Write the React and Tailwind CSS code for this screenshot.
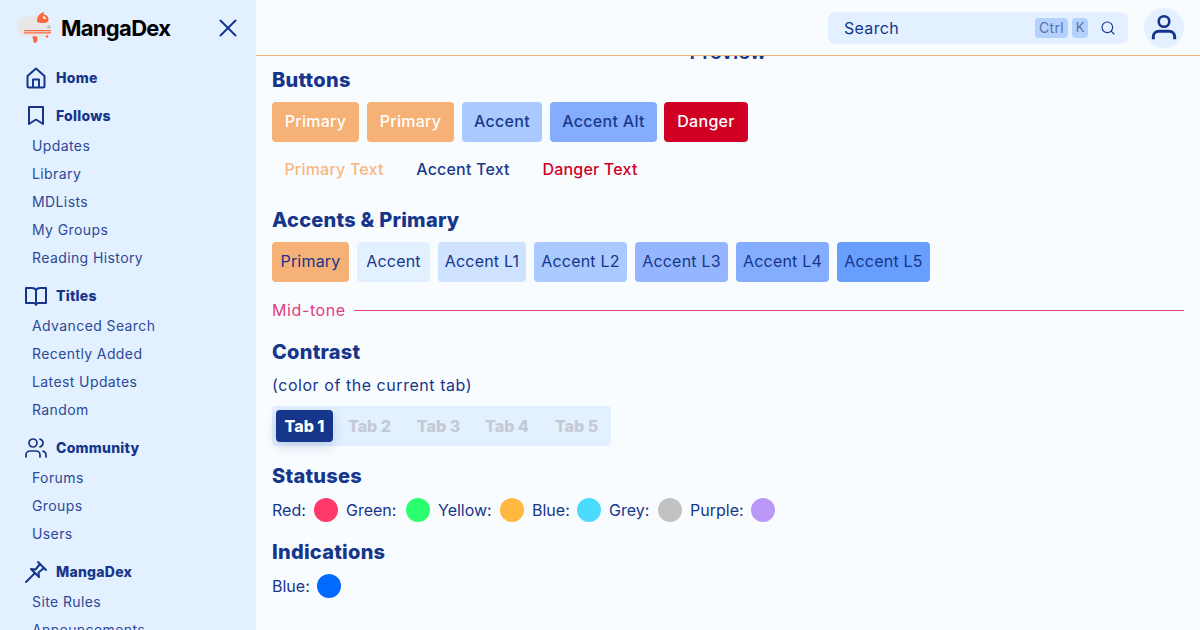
import { Search, Users, X } from "lucide-react";

function HomeIcon(props) {
  return (
    <svg viewBox="0 0 24 24" fill="none" stroke="currentColor" strokeWidth="2" strokeLinejoin="round" {...props}>
      <path d="M3.500 10L12 2.500 20.500 10V20a1.500 1.500 0 0 1-1.500 1.500H5A1.500 1.500 0 0 1 3.500 20z" />
      <path d="M9 21.500V13.500h6V21.500" />
    </svg>
  );
}

function BookmarkIcon(props) {
  return (
    <svg viewBox="0 0 24 24" fill="none" stroke="currentColor" strokeWidth="2" strokeLinejoin="round" {...props}>
      <path d="M5 3h14v17l-7-4.500-7 4.500z" />
    </svg>
  );
}

function BookIcon(props) {
  return (
    <svg viewBox="0 0 24 24" fill="none" stroke="currentColor" strokeWidth="2" strokeLinejoin="round" {...props}>
      <path d="M12 6C11 4.500 9.500 4 8 4H2v15h7c1.500 0 3 .5 3 2 0-1.500 1.500-2 3-2h7V4h-6c-1.500 0-3 .5-4 2z" />
      <path d="M12 6v15" />
    </svg>
  );
}

function PinIcon(props) {
  return (
    <svg viewBox="0 0 24 24" fill="none" stroke="currentColor" strokeWidth="2" strokeLinecap="round" strokeLinejoin="round" {...props}>
      <path d="M14 2l8 8" />
      <path d="M16 4l-4.500 5.500-4.500-.5 8 8-.5-4.500L20 8" />
      <path d="M11 13l-9 9" />
    </svg>
  );
}

const navGroups = [
  { title: "Home", icon: HomeIcon, items: [] },
  { title: "Follows", icon: BookmarkIcon, items: ["Updates", "Library", "MDLists", "My Groups", "Reading History"] },
  { title: "Titles", icon: BookIcon, items: ["Advanced Search", "Recently Added", "Latest Updates", "Random"] },
  { title: "Community", icon: Users, items: ["Forums", "Groups", "Users"] },
  { title: "MangaDex", icon: PinIcon, items: ["Site Rules", "Announcements"] },
];

const buttons = [
  { label: "Primary", className: "w-[87px] bg-[#f5b176] text-white" },
  { label: "Primary", className: "w-[87px] bg-[#f5b176] text-white" },
  { label: "Accent", className: "w-[80px] bg-[#a9c9ff] text-[#1b3a8a]" },
  { label: "Accent Alt", className: "w-[107px] mr-[-1px] bg-[#85adff] text-[#1b3a8a]" },
  { label: "Danger", className: "w-[84px] bg-[#d00025] text-white" },
];

const textButtons = [
  { label: "Primary Text", className: "w-[124px] text-[#f9b67f]" },
  { label: "Accent Text", className: "w-[118px] text-[#1b3a8a]" },
  { label: "Danger Text", className: "w-[120px] text-[#d00025]" },
];

const accents = [
  { label: "Primary", className: "w-[77px] bg-[#f5b176]" },
  { label: "Accent", className: "w-[73px] bg-[#e3f0ff]" },
  { label: "Accent L1", className: "w-[88px] bg-[#cfe2ff]" },
  { label: "Accent L2", className: "w-[93px] bg-[#a9c9ff]" },
  { label: "Accent L3", className: "w-[93px] bg-[#95b6ff]" },
  { label: "Accent L4", className: "w-[93px] bg-[#85adff]" },
  { label: "Accent L5", className: "w-[93px] bg-[#689fff]" },
];

const tabs = [
  { label: "Tab 2", className: "w-[47px] ml-[13px]" },
  { label: "Tab 3", className: "w-[45px] ml-[23px]" },
  { label: "Tab 4", className: "w-[46px] ml-[23px]" },
  { label: "Tab 5", className: "w-[45px] ml-[24px]" },
];

const statuses = [
  { label: "Red:", width: "w-[34px]", color: "bg-[#ff3a6b]" },
  { label: "Green:", width: "w-[52px]", color: "bg-[#2cff6e]" },
  { label: "Yellow:", width: "w-[54px]", color: "bg-[#ffb840]" },
  { label: "Blue:", width: "w-[37px]", color: "bg-[#4bdbff]" },
  { label: "Grey:", width: "w-[41px]", color: "bg-[#c2c2c2]" },
  { label: "Purple:", width: "w-[53px]", color: "bg-[#b998f8]" },
];

function Logo() {
  return (
    <svg viewBox="-1 0 37 33" className="w-[37px] h-[33px] shrink-0 ml-[-1px]">
      <path d="M-1 15c0-7 6-11 14-11 8 0 13 0 18 4 3 3 3 10 1 14-2 3-5 3-8 3H7c-5 0-8-4-8-10z" fill="#e8e8e8" />
      <path d="M19 9c0-5 3-8 7-9l-.5 2.500c2.500 0 5 2 5 4.500 0 3-2 4-5.500 4-3 0-6-.5-6-2z" fill="#ff6740" />
      <path d="M25 4c1.500 0 3 1.500 3 3l-3-.5z" fill="#ffffff" />
      <path d="M29 14l3-1 .5 3-3 1z" fill="#b8c2cc" />
      <path d="M6 18h27v1.200H6zM6 20.200h27v1.200H6z" fill="#ff6740" />
      <path d="M14.500 24.500c1-.5 3.500-.5 4.500 0l.5 2.500c0 2-1 3.500-2.500 4-1 0-1.500-1-1.500-2 0-1.500-1-2.500-1-4.500z" fill="#ff6740" />
      <circle cx="29" cy="24.500" r="1.200" fill="#ff6740" />
    </svg>
  );
}

function UserIcon() {
  return (
    <svg viewBox="0 0 28 30" fill="none" stroke="#15368a" className="w-[26px] h-[28px]">
      <circle cx="14" cy="8" r="5.700" strokeWidth="2.800" />
      <path d="M2.500 27v-2.500a6 6 0 0 1 6-6h11a6 6 0 0 1 6 6V27" strokeWidth="3.200" />
    </svg>
  );
}

function Sidebar() {
  return (
    <aside className="w-64 h-full shrink-0 overflow-hidden bg-[#e3f0ff] text-[#15368a]">
      <div className="h-14 pl-[18px] pr-[13px] flex items-center">
        <Logo />
        <span className="ml-[7px] text-[22px] font-bold tracking-[-0.7px] text-black">MangaDex</span>
        <X className="w-[30px] h-[30px] ml-auto text-[#15368a]" strokeWidth={1.6} />
      </div>
      <nav className="px-6 pt-[6px] flex flex-col">
        {navGroups.map(({ title, icon: Icon, items }, i) => (
          <div key={title} className={i === 0 ? "" : i === 1 ? "mt-[6px]" : "mt-2"}>
            <div className="h-8 flex items-center gap-2">
              <Icon className="w-6 h-6 shrink-0" strokeWidth={title === "Community" ? 1.7 : 2} />
              <span className="pb-0.5 text-[14px] font-extrabold tracking-[0.25px]">{title}</span>
            </div>
            {items.map((item) => (
              <div key={item} className="h-7 pb-0.5 pl-2 flex items-center text-[14px] text-[#2c4a98] tracking-[0.4px] whitespace-nowrap">
                {item}
              </div>
            ))}
          </div>
        ))}
      </nav>
    </aside>
  );
}

function Header() {
  return (
    <header className="h-14 shrink-0 pr-4 flex items-center justify-end border-b border-[#f5b176] text-[#15368a]">
      <div className="w-[300px] h-8 pl-4 pr-3 flex items-center rounded-lg bg-[#e3f0ff]">
        <span className="text-[16px] tracking-[0.3px]">Search</span>
        <span className="ml-auto h-5 w-[33px] flex items-center justify-center rounded bg-[#b5d2ff] text-[14px] tracking-[0.3px] text-[#5571ad]">
          Ctrl
        </span>
        <span className="ml-1 h-5 w-4 flex items-center justify-center rounded bg-[#b5d2ff] text-[13px] text-[#5571ad]">
          K
        </span>
        <Search className="ml-[12px] w-[16px] h-[16px]" strokeWidth={1.7} />
      </div>
      <div className="ml-4 w-10 h-10 flex items-center justify-center rounded-full bg-[#e3f0ff]">
        <UserIcon />
      </div>
    </header>
  );
}

function Heading({ className = "", children }) {
  return <h2 className={`h-7 text-[20px] font-extrabold leading-7 tracking-[0.25px] ${className}`}>{children}</h2>;
}

export default function App() {
  return (
    <div className="w-full h-screen flex overflow-hidden bg-[#f9fcff] text-[#15368a] font-[Inter,sans-serif]">
      <Sidebar />
      <main className="flex-1 min-w-0 flex flex-col">
        <Header />
        <div className="flex-1 overflow-hidden px-4">
          <div className="-mt-[18px] h-7 text-center text-[20px] font-semibold leading-7">Preview</div>

          <Heading>Buttons</Heading>
          <div className="mt-2 flex gap-2">
            {buttons.map((b, i) => (
              <button key={i} className={`h-10 pb-0.5 flex items-center justify-center rounded text-[16px] font-medium tracking-[0.3px] ${b.className}`}>
                {b.label}
              </button>
            ))}
          </div>
          <div className="mt-2 flex gap-2">
            {textButtons.map((b) => (
              <button key={b.label} className={`h-10 pb-0.5 flex items-center justify-center text-[16px] font-medium tracking-[0.2px] ${b.className}`}>
                {b.label}
              </button>
            ))}
          </div>

          <Heading className="mt-4">Accents &amp; Primary</Heading>
          <div className="mt-2 flex gap-2">
            {accents.map((a) => (
              <div key={a.label} className={`h-10 pb-0.5 flex items-center justify-center rounded text-[16px] tracking-[0.2px] ${a.className}`}>
                {a.label}
              </div>
            ))}
          </div>

          <div className="mt-4 h-6 flex items-center gap-2 text-[#e0407e]">
            <span className="text-[16px] tracking-[0.6px] w-[74px] whitespace-nowrap">Mid-tone</span>
            <div className="flex-1 h-px bg-[#e0407e]" />
          </div>

          <Heading className="mt-4">Contrast</Heading>
          <p className="mt-[7px] h-6 text-[16px] leading-6 tracking-[0.55px]">(color of the current tab)</p>
          <div className="mt-[9px] w-[339px] h-10 flex items-center pl-1 rounded-sm bg-[#e3f0ff]">
            <div className="w-[57px] h-8 flex items-center justify-center rounded-sm bg-[#15368a] text-white text-[16px] font-extrabold shadow-[0_4px_12px_rgba(21,54,138,0.2)]">
              Tab 1
            </div>
            {tabs.map((t) => (
              <div key={t.label} className={`text-[16px] font-extrabold text-[#c4c9d6] whitespace-nowrap text-center ${t.className}`}>
                {t.label}
              </div>
            ))}
          </div>

          <Heading className="mt-4">Statuses</Heading>
          <div className="mt-2 flex items-center gap-2">
            {statuses.map((s) => (
              <div key={s.label} className="flex items-center gap-2">
                <span className={`text-[16px] whitespace-nowrap ${s.width}`}>{s.label}</span>
                <span className={`w-6 h-6 rounded-full ${s.color}`} />
              </div>
            ))}
          </div>

          <Heading className="mt-4">Indications</Heading>
          <div className="mt-2 flex items-center gap-2">
            <span className="text-[16px] w-[37px]">Blue:</span>
            <span className="w-6 h-6 rounded-full bg-[#0069ff]" />
          </div>
        </div>
      </main>
    </div>
  );
}
